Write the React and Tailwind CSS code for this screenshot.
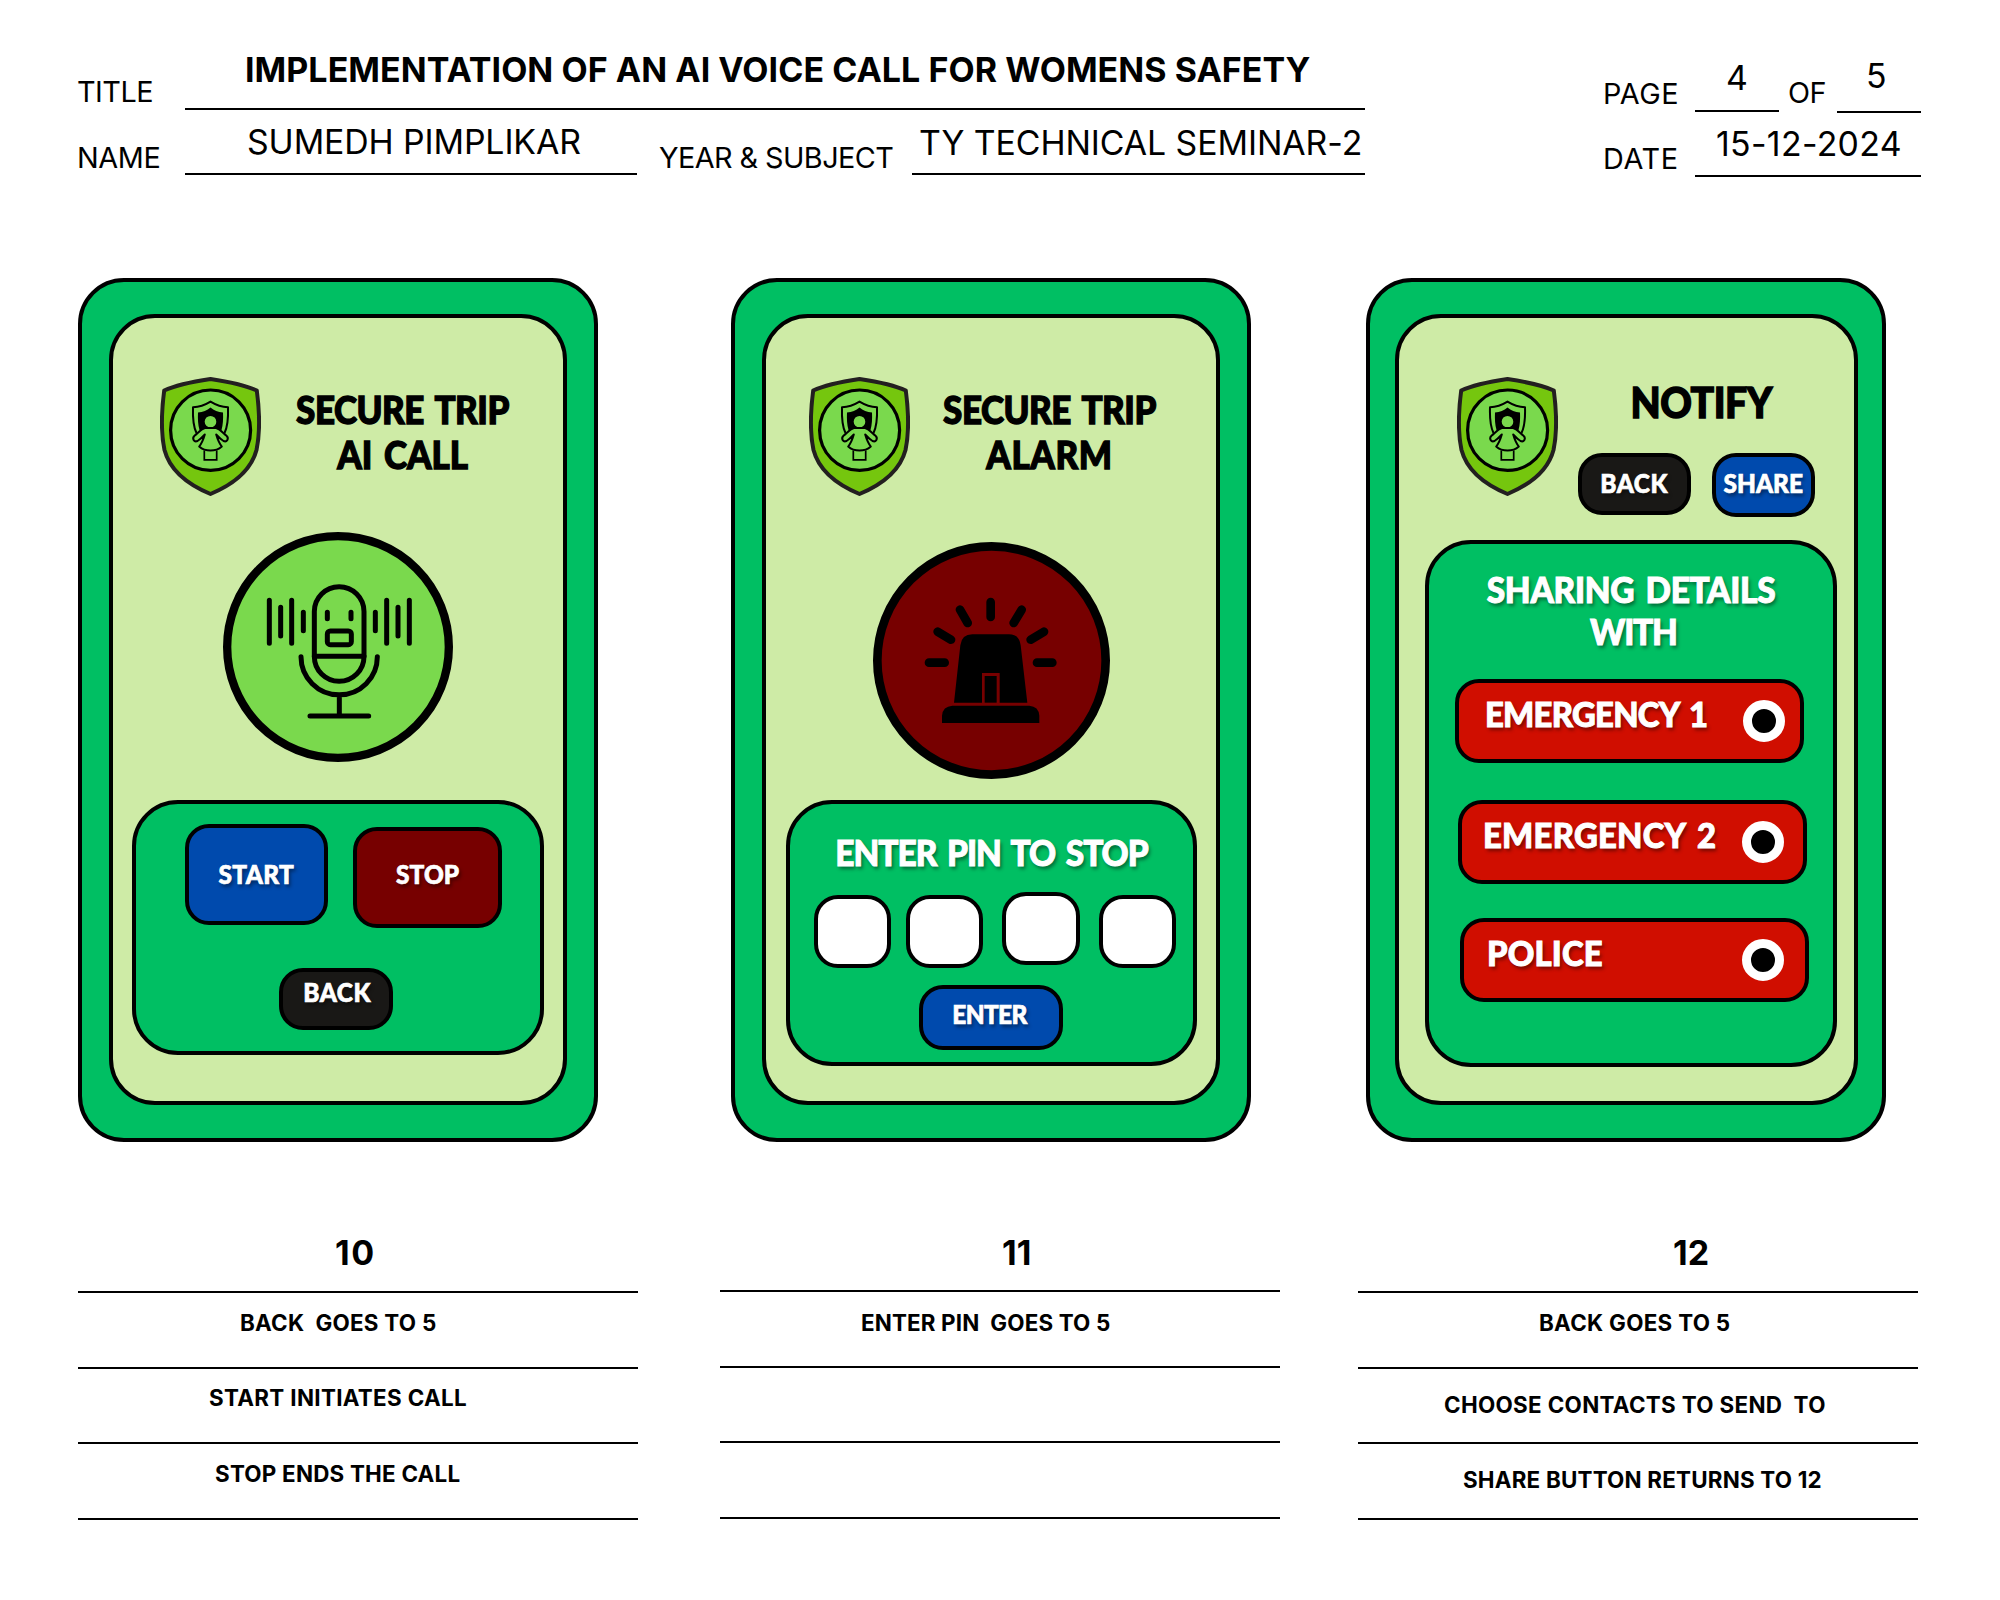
const heading = "font-['Lato',sans-serif] font-black whitespace-pre [word-spacing:4px]";
const onDark = "text-white [text-shadow:2px_3px_4px_rgba(0,0,0,0.45)]";

function ShieldLogo({ className }) {
  return (
    <svg viewBox="0 0 101 119" className={`h-[119px] w-[101px] shrink-0 ${className}`} fill="none" strokeLinejoin="round">
      <path
        d="M50.5 2 C34 4.5 16 8 4.2 13.5 C1.5 34 0.5 54 4.5 73 C10 94 29 108 50.5 117 C72 108 91 94 96.5 73 C100.5 54 99.5 34 96.8 13.5 C85 8 67 4.5 50.5 2 Z"
        fill="#75c60e"
        stroke="#231f20"
        strokeWidth="4"
      />
      <ellipse cx="50.6" cy="53.2" rx="40" ry="40.2" fill="#7ad94d" stroke="#000" strokeWidth="3.2" />
      <path
        d="M36.5 56 C33.5 50 32.6 42 33 30.2 C39.5 30 45 28 50.5 24.6 C56 28 61.5 30 68 30.2 C68.4 42 67.5 50 64.5 56"
        stroke="#000"
        strokeWidth="2"
      />
      <path d="M38 35.5 C43 35 47 33.5 50.5 30.5 C54 33.5 58 35 63 35.5 C63.3 42 63 48 61.5 53 H39.5 C38 48 37.7 42 38 35.5 Z" fill="#000" />
      <circle cx="50.5" cy="44.7" r="5.8" fill="#7ad94d" />
      <path
        d="M45 51 H56 C59 51.5 62.5 55.5 66.5 58.8 C69.3 61.3 67 65.5 63.5 64 C61 62.5 58.5 60 56.2 57.5 C57.5 62 59 66 61.8 69.5 C58.5 72.5 54.5 73.6 50.5 73.6 C46.5 73.6 42.5 72.5 39.2 69.5 C42 66 43.5 62 44.8 57.5 C42.5 60 40 62.5 37.5 64 C34 65.5 31.7 61.3 34.5 58.8 C38.5 55.5 42 51.5 45 51 Z"
        fill="#7ad94d"
        stroke="#000"
        strokeWidth="2"
      />
      <path d="M44.3 73.5 V82.8 H56.7 V73.5" stroke="#000" strokeWidth="1.7" strokeLinejoin="miter" />
    </svg>
  );
}

function MicIcon() {
  return (
    <svg viewBox="38 36 690 690" className="ml-[110px] size-[230px]" fill="none" stroke="#000" strokeLinecap="round">
      <circle cx="383" cy="381" r="332.5" fill="#7ad94d" strokeWidth="25" />
      <g strokeWidth="15">
        <path d="M177 241V370M211 262V348M244 241V370M279 277V332M495 277V332M529 241V370M563 262V348M597 241V370" />
        <rect x="312" y="200" width="149" height="284" rx="74.5" />
        <path d="M312 409H461M351 277V296M422 277V296" />
        <rect x="351" y="333" width="72" height="41" rx="9" />
        <path d="M272 410A114.5 114.5 0 0 0 501 410M387 524V588M299 588H475" />
      </g>
    </svg>
  );
}

function AlarmIcon() {
  return (
    <svg viewBox="38 36 711 711" className="ml-[107px] size-[237px]">
      <circle cx="393.5" cy="391.5" r="342.5" fill="#770000" stroke="#000" strokeWidth="26" />
      <path
        d="M391 216V261M299 239L322 279M484 239L460 279M232 305L272 329M551 305L511 329M206 398H253M530 398H576"
        stroke="#000"
        strokeWidth="26"
        strokeLinecap="round"
      />
      <path d="M281 518L300 346Q304 313 336 313H446Q477 313 481 346L501 518H418V429H365V518Z" />
      <path d="M373 438H409V518H373Z" />
      <path d="M245 579V557Q247 529 276 527H507Q535 529 537 557V579Z" />
    </svg>
  );
}

function Phone({ className, screenClassName, children }) {
  return (
    <div className={`h-[864px] w-[520px] shrink-0 rounded-[46px] border-4 border-black bg-[#00bf63] pt-[32px] ${className}`}>
      <div className={`flex h-[791px] flex-col rounded-[46px] border-4 border-black bg-[#ceeba6] ${screenClassName}`}>{children}</div>
    </div>
  );
}

function Button({ className, children }) {
  return (
    <button className={`flex shrink-0 items-start justify-center rounded-[24px] border-4 border-black text-[26px] leading-none [-webkit-text-stroke:0.7px] ${heading} ${onDark} ${className}`}>
      <span className="block scale-x-[0.94]">{children}</span>
    </button>
  );
}

function Contact({ className, ringClassName, children }) {
  return (
    <div className={`flex h-[84px] w-[349px] items-start justify-between rounded-[24px] border-4 border-black bg-[#d00e00] pt-[14px] text-[34.9px] leading-none [-webkit-text-stroke:1px] ${heading} ${onDark} ${className}`}>
      <span className="block origin-left scale-x-[0.94]">{children}</span>
      <span className={`mt-[3px] size-[42px] shrink-0 rounded-full border-[9px] border-white bg-black ${ringClassName}`} />
    </div>
  );
}

function Notes({ className, number, numberClassName, rows }) {
  return (
    <div className={`w-[560px] shrink-0 font-bold ${className}`}>
      <div className={`h-[151px] border-b-2 border-black text-[34px] leading-none ${numberClassName}`}>{number}</div>
      {rows.map(([text, style], i) => (
        <div key={i} className={`h-[75.5px] border-b-2 border-black text-[22.4px] leading-none whitespace-pre ${style}`}>
          {text}
        </div>
      ))}
    </div>
  );
}

export default function App() {
  return (
    <div className="h-[1600px] w-[2000px] overflow-hidden bg-white font-['Inter',sans-serif] text-black">
      <header className="flex h-[178px] pl-[78px] leading-none whitespace-nowrap">
        <div className="w-[1287px]">
          <div className="flex h-[110px] text-[28.8px]">
            <div className="w-[107px] pt-[78px] tracking-[-0.48px]">
              <span className="-ml-px">TITLE</span>
            </div>
            <div className="flex-1 border-b-2 border-black pt-[53px] pl-[60px] text-[34px] font-bold tracking-[0.04px]">
              IMPLEMENTATION OF AN AI VOICE CALL FOR WOMENS SAFETY
            </div>
          </div>
          <div className="flex h-[65px] text-[28.8px]">
            <div className="w-[107px] pt-[34px] tracking-[-0.35px]">
              <span className="-ml-px">NAME</span>
            </div>
            <div className="w-[452px] border-b-2 border-black pt-[15px] pl-[62px] text-[33.8px] tracking-[-0.1px]">SUMEDH PIMPLIKAR</div>
            <div className="w-[275px] pt-[34px] pl-[22px] tracking-[-0.56px]">YEAR &amp; SUBJECT</div>
            <div className="w-[453px] border-b-2 border-black pt-[16px] pl-[7px] text-[33.8px] tracking-[-0.06px]">TY TECHNICAL SEMINAR-2</div>
          </div>
        </div>
        <div className="ml-[238px] w-[318px] text-[28.8px]">
          <div className="flex h-[113px] items-start">
            <div className="w-[92px] pt-[80px] tracking-[0.5px]">PAGE</div>
            <div className="h-[112px] w-[84px] border-b-2 border-black pt-[61px] pl-[31px] text-[33.8px]">4</div>
            <div className="w-[58px] pt-[79px] pl-[9px] tracking-[-0.5px]">OF</div>
            <div className="h-[113px] w-[84px] border-b-2 border-black pt-[59px] pl-[29px] text-[33.8px]">5</div>
          </div>
          <div className="flex h-[64px]">
            <div className="w-[92px] pt-[32px] tracking-[0.67px]">DATE</div>
            <div className="w-[226px] border-b-2 border-black pt-[14px] pl-[21px] text-[33.8px] tracking-[0.34px]">15-12-2024</div>
          </div>
        </div>
      </header>

      <main className="mt-[100px] flex h-[864px]">
        <Phone className="ml-[78px]" screenClassName="ml-[27px] w-[458px]">
          <div className="flex h-[214px] shrink-0">
            <ShieldLogo className="mt-[59px] ml-[47px]" />
            <h2 className={`mt-[69px] ml-[24px] w-[235px] scale-x-[0.94] text-center text-[37.2px] leading-[45px] tracking-[-0.5px] [-webkit-text-stroke:1.3px] ${heading}`}>
              SECURE TRIP
              <br />
              <span className="tracking-[-0.1px]">AI CALL</span>
            </h2>
          </div>
          <MicIcon />
          <div className="mt-[38px] ml-[19px] h-[255px] w-[412px] rounded-[46px] border-4 border-black bg-[#00bf63]">
            <div className="flex h-[164px] items-start pt-[20px] pl-[49px]">
              <Button className="h-[101px] w-[143px] bg-[#004aad] pt-[33px] tracking-[0.4px]">START</Button>
              <Button className="mt-[3px] ml-[25px] h-[101px] w-[149px] bg-[#770000] pt-[30px] tracking-[0.1px]">STOP</Button>
            </div>
            <Button className="ml-[143px] h-[62px] w-[114px] bg-[#191816] pt-[7px] pl-[3px] tracking-[0.6px]">BACK</Button>
          </div>
        </Phone>

        <Phone className="ml-[133px]" screenClassName="ml-[27px] w-[458px]">
          <div className="flex h-[224px] shrink-0">
            <ShieldLogo className="mt-[59px] ml-[43px]" />
            <h2 className={`mt-[69px] ml-[22px] w-[235px] scale-x-[0.94] text-center text-[37.2px] leading-[45px] tracking-[-0.5px] [-webkit-text-stroke:1.3px] ${heading}`}>
              SECURE TRIP
              <br />
              <span className="tracking-[0.7px]">ALARM</span>
            </h2>
          </div>
          <AlarmIcon />
          <div className="mt-[21px] ml-[20px] h-[266px] w-[411px] rounded-[46px] border-4 border-black bg-[#00bf63] pt-[31px]">
            <div className={`scale-x-[0.94] text-center text-[35.6px] leading-none tracking-[-1.1px] [-webkit-text-stroke:1px] ${heading} ${onDark}`}>
              ENTER PIN TO STOP
            </div>
            <div className="flex h-[114px] items-start pt-[24px] pl-[24px]">
              <div className="h-[73px] w-[77px] rounded-[24px] border-4 border-black bg-white" />
              <div className="ml-[15px] h-[73px] w-[77px] rounded-[24px] border-4 border-black bg-white" />
              <div className="-mt-[3px] ml-[19px] h-[73px] w-[78px] rounded-[24px] border-4 border-black bg-white" />
              <div className="ml-[19px] h-[73px] w-[77px] rounded-[24px] border-4 border-black bg-white" />
            </div>
            <Button className="ml-[129px] h-[65px] w-[144px] bg-[#004aad] pt-[12px] pr-[2px] tracking-[-0.7px]">ENTER</Button>
          </div>
        </Phone>

        <Phone className="ml-[115px]" screenClassName="ml-[25px] w-[463px]">
          <div className="flex h-[222px] shrink-0">
            <ShieldLogo className="mt-[59px] ml-[58px]" />
            <div className="ml-[20px] w-[237px] pt-[64px]">
              <h2 className={`h-[71px] scale-x-[0.94] pl-[10px] text-center text-[41.5px] leading-none tracking-[-0.5px] [-webkit-text-stroke:1.4px] ${heading}`}>NOTIFY</h2>
              <div className="flex justify-between">
                <Button className="h-[62px] w-[113px] bg-[#191816] pt-[13px] tracking-[0.6px]">BACK</Button>
                <Button className="h-[64px] w-[103px] bg-[#004aad] pt-[13px]">SHARE</Button>
              </div>
            </div>
          </div>
          <div className="ml-[26px] h-[527px] w-[412px] rounded-[46px] border-4 border-black bg-[#00bf63] pt-[25px]">
            <div className={`mb-[26px] scale-x-[0.94] text-center text-[35.6px] leading-[42px] tracking-[-0.35px] [-webkit-text-stroke:1px] ${heading} ${onDark}`}>
              SHARING DETAILS
              <br />
              <span className="pl-[5px] tracking-[-1.3px]">WITH</span>
            </div>
            <Contact className="mb-[37px] ml-[26px] pl-[26px] tracking-[-0.75px]" ringClassName="mr-[15px]">EMERGENCY 1</Contact>
            <Contact className="mb-[34px] ml-[29px] pl-[21px] tracking-[0.3px]" ringClassName="mr-[19px]">EMERGENCY 2</Contact>
            <Contact className="ml-[31px] pl-[23px] tracking-[0.2px]" ringClassName="mr-[21px]">POLICE</Contact>
          </div>
        </Phone>
      </main>

      <footer className="flex">
        <Notes
          className="ml-[78px]"
          number="10"
          numberClassName="pt-[94px] pl-[257px] tracking-[1.5px]"
          rows={[
            ["BACK  GOES TO 5", "pt-[19px] pl-[162px] tracking-[0.26px]"],
            ["START INITIATES CALL", "pt-[18px] pl-[131px] tracking-[0.33px]"],
            ["STOP ENDS THE CALL", "pt-[19px] pl-[137px] tracking-[0.22px]"],
          ]}
        />
        <Notes
          className="-mt-px ml-[82px]"
          number="11"
          numberClassName="pt-[95px] pl-[282px]"
          rows={[
            ["ENTER PIN  GOES TO 5", "pt-[20px] pl-[141px] tracking-[0.15px]"],
            ["", ""],
            ["", ""],
          ]}
        />
        <Notes
          className="ml-[78px]"
          number="12"
          numberClassName="pt-[94px] pl-[315px]"
          rows={[
            ["BACK GOES TO 5", "pt-[19px] pl-[181px] tracking-[0.3px]"],
            ["CHOOSE CONTACTS TO SEND  TO", "pt-[25px] pl-[86px] tracking-[0.33px]"],
            ["SHARE BUTTON RETURNS TO 12", "pt-[25px] pl-[105px] tracking-[0.2px]"],
          ]}
        />
      </footer>
    </div>
  );
}
